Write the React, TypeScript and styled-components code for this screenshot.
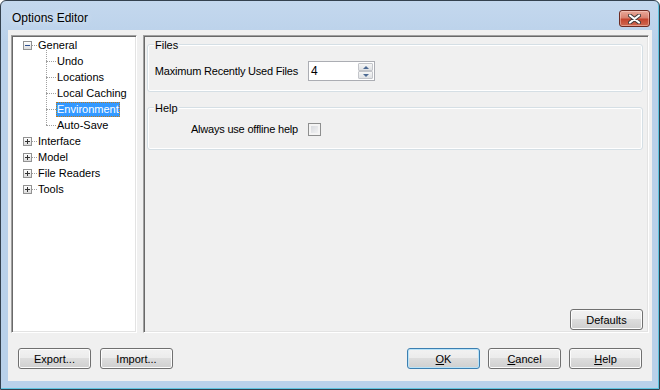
import React from 'react';
import styled, { createGlobalStyle, css } from 'styled-components';

const GlobalStyle = createGlobalStyle`
	html, body {
		margin: 0;
		padding: 0;
		background: #ffffff;
	}
	body {
		font-family: "Liberation Sans", Arial, sans-serif;
		font-size: 11px;
		color: #000;
	}
	* {
		box-sizing: border-box;
	}
`;

const Window = styled.div`
	width: 660px;
	height: 390px;
	display: flex;
	flex-direction: column;
	border: 1px solid #34414f;
	border-radius: 6px 6px 0 0;
	background: linear-gradient(#c4d8ee 0, #bad1ea 40px, #b9d1ea 100%);
	box-shadow: inset -1px -1px 0 #5ec4e0;
`;

const TitleBar = styled.div`
	height: 29px;
	flex: none;
	display: flex;
	justify-content: space-between;
	align-items: flex-start;
	padding: 0 9px 0 11px;
`;

const Title = styled.div`
	padding-top: 10px;
	font-size: 12px;
	line-height: 15px;
	color: #000;
	text-shadow: 0 0 6px rgba(255, 255, 255, 0.8);
`;

const CloseButton = styled.div`
	margin-top: 9px;
	width: 31px;
	height: 17px;
	display: flex;
	align-items: center;
	justify-content: center;
	border: 1px solid #6d2b22;
	border-radius: 3px;
	background: linear-gradient(#e9a99a 0%, #d88270 45%, #c4452f 55%, #cf6a52 100%);
	box-shadow: inset 0 0 0 1px rgba(255, 220, 210, 0.45);
`;

const Client = styled.div`
	flex: 1;
	margin: 0 7px 8px;
	padding: 5px 3px 0;
	display: flex;
	flex-direction: column;
	background: #f0f0f0;
`;

const Main = styled.div`
	height: 298px;
	display: flex;
	gap: 6px;
`;

const sunken = css`
	border: 1px solid;
	border-color: #a0a0a0 #ffffff #ffffff #a0a0a0;
	box-shadow: inset 1px 1px 0 #696969, inset -1px -1px 0 #e3e3e3;
	padding: 1px;
`;

const Tree = styled.div`
	${sunken};
	width: 126px;
	background: #ffffff;
`;

const TreeRow = styled.div<{ $indent: number }>`
	height: 16px;
	display: flex;
	align-items: center;
	padding-left: ${(p) => p.$indent}px;
	white-space: nowrap;
`;

const Expander = styled.div`
	width: 9px;
	height: 9px;
	flex: none;
	display: flex;
	align-items: center;
	justify-content: center;
	border: 1px solid #929292;
	background: linear-gradient(#ffffff, #dcdcdc);
`;

const Connector = styled.div<{ $width: number }>`
	width: ${(p) => p.$width}px;
	height: 0;
	flex: none;
	border-top: 1px dotted #a0a0a0;
	margin-top: 1px;
`;

const NodeLabel = styled.div<{ $selected?: boolean }>`
	height: 15px;
	line-height: 15px;
	padding: 0 1px;
	${(p) =>
		p.$selected &&
		css`
			background: #3399ff;
			color: #ffffff;
			outline: 1px dotted #c07a1a;
			outline-offset: -1px;
		`}
`;

const Children = styled.div`
	position: relative;
	&::before {
		content: '';
		position: absolute;
		left: 33px;
		top: -3px;
		bottom: 8px;
		border-left: 1px dotted #a0a0a0;
	}
`;

const Panel = styled.div`
	${sunken};
	flex: 1;
	display: flex;
	flex-direction: column;
	padding: 1px 5px 1px 3px;
	background: #f0f0f0;
`;

const Group = styled.fieldset<{ $top: number; $gap: number }>`
	margin: ${(p) => p.$gap}px 0 0 0;
	padding: ${(p) => p.$top}px 0 10px;
	min-width: 0;
	border: 1px solid #d5dfe5;
	border-radius: 3px;
	box-shadow: inset 0 0 0 1px #ffffff;
`;

const Legend = styled.legend`
	margin-left: 6px;
	padding: 0 1px;
	font-size: 11px;
	line-height: 13px;
	background: #f0f0f0;
	position: relative;
	top: 1px;
`;

const FieldRow = styled.div`
	height: 20px;
	display: grid;
	grid-template-columns: 150px auto;
	column-gap: 10px;
	align-items: center;
`;

const FieldLabel = styled.label`
	justify-self: end;
	white-space: nowrap;
	letter-spacing: -0.2px;
`;

const Spinner = styled.div`
	width: 67px;
	height: 20px;
	display: flex;
	border: 1px solid #abadb3;
	background: #ffffff;
`;

const SpinValue = styled.div`
	flex: 1;
	padding-left: 2px;
	line-height: 18px;
	font-size: 12px;
`;

const SpinButtons = styled.div`
	width: 15px;
	margin-right: 1px;
	padding: 1px 0;
	display: flex;
	flex-direction: column;
`;

const SpinButton = styled.div<{ $up?: boolean }>`
	height: 8px;
	display: flex;
	align-items: center;
	justify-content: center;
	border: 1px solid #c3c5ca;
	border-radius: 1px;
	background: linear-gradient(#f6f6f6, #dfe1e4);
	&::after {
		content: '';
		border-left: 3px solid transparent;
		border-right: 3px solid transparent;
		${(p) => (p.$up ? 'border-bottom: 3px solid #4d6a93;' : 'border-top: 3px solid #4d6a93;')}
	}
`;

const CheckBox = styled.div`
	width: 13px;
	height: 13px;
	border: 1px solid #8e8f8f;
	background: linear-gradient(135deg, #d2d5da, #f7f7f7);
	box-shadow: inset 0 0 0 2px #f4f4f4;
`;

const PanelFooter = styled.div`
	margin-top: auto;
	display: flex;
	justify-content: flex-end;
	margin-bottom: 1px;
`;

const Button = styled.div<{ $default?: boolean }>`
	width: 73px;
	height: 21px;
	display: flex;
	align-items: center;
	justify-content: center;
	border: 1px solid #707070;
	border-radius: 3px;
	background: linear-gradient(#f2f2f2 0%, #ebebeb 50%, #dddddd 50%, #cfcfcf 100%);
	box-shadow: inset 0 0 0 1px #fcfcfc;
	font-size: 11px;
	${(p) =>
		p.$default &&
		css`
			border-color: #3c7fb1;
			box-shadow: inset 0 0 0 1px #b9e3f8;
		`}
`;

const ButtonBar = styled.div`
	margin-top: 15px;
	padding: 0 7px;
	display: flex;
	gap: 8px;
`;

const ImportGap = styled.div`
	width: 1px;
	margin-left: -8px;
`;

const Spacer = styled.div`
	flex: 1;
`;

const CloseGlyph = () => (
	<svg width="13" height="10" viewBox="0 0 13 10">
		<path d="M2 1.5 L11 8.5 M11 1.5 L2 8.5" stroke="#3f3a3a" strokeWidth="4" strokeLinecap="round" />
		<path d="M2 1.5 L11 8.5 M11 1.5 L2 8.5" stroke="#ffffff" strokeWidth="2.2" strokeLinecap="round" />
	</svg>
);

const ExpandGlyph = ({ open }: { open: boolean }) => (
	<svg width="7" height="7" viewBox="0 0 7 7" shapeRendering="crispEdges">
		<rect x="1" y="3" width="5" height="1" fill={open ? '#2d4f8f' : '#333333'} />
		{!open && <rect x="3" y="1" width="1" height="5" fill="#333333" />}
	</svg>
);

const generalChildren = ['Undo', 'Locations', 'Local Caching', 'Environment', 'Auto-Save'];
const rootNodes = ['Interface', 'Model', 'File Readers', 'Tools'];

export default function App() {
	return (
		<>
			<GlobalStyle />
			<Window>
				<TitleBar>
					<Title>Options Editor</Title>
					<CloseButton>
						<CloseGlyph />
					</CloseButton>
				</TitleBar>
				<Client>
					<Main>
						<Tree>
							<TreeRow $indent={10}>
								<Expander>
									<ExpandGlyph open />
								</Expander>
								<Connector $width={5} />
								<NodeLabel>General</NodeLabel>
							</TreeRow>
							<Children>
								{generalChildren.map((name) => (
									<TreeRow key={name} $indent={33}>
										<Connector $width={10} />
										<NodeLabel $selected={name === 'Environment'}>{name}</NodeLabel>
									</TreeRow>
								))}
							</Children>
							{rootNodes.map((name) => (
								<TreeRow key={name} $indent={10}>
									<Expander>
										<ExpandGlyph open={false} />
									</Expander>
									<Connector $width={5} />
									<NodeLabel>{name}</NodeLabel>
								</TreeRow>
							))}
						</Tree>
						<Panel>
							<Group $top={10} $gap={1}>
								<Legend>Files</Legend>
								<FieldRow>
									<FieldLabel>Maximum Recently Used Files</FieldLabel>
									<Spinner>
										<SpinValue>4</SpinValue>
										<SpinButtons>
											<SpinButton $up />
											<SpinButton />
										</SpinButtons>
									</Spinner>
								</FieldRow>
							</Group>
							<Group $top={5} $gap={9}>
								<Legend>Help</Legend>
								<FieldRow>
									<FieldLabel>Always use offline help</FieldLabel>
									<CheckBox />
								</FieldRow>
							</Group>
							<PanelFooter>
								<Button>Defaults</Button>
							</PanelFooter>
						</Panel>
					</Main>
					<ButtonBar>
						<Button>Export...</Button>
						<ImportGap />
						<Button>Import...</Button>
						<Spacer />
						<Button $default>
							<u>O</u>K
						</Button>
						<Button>
							<u>C</u>ancel
						</Button>
						<Button>
							<u>H</u>elp
						</Button>
					</ButtonBar>
				</Client>
			</Window>
		</>
	);
}
